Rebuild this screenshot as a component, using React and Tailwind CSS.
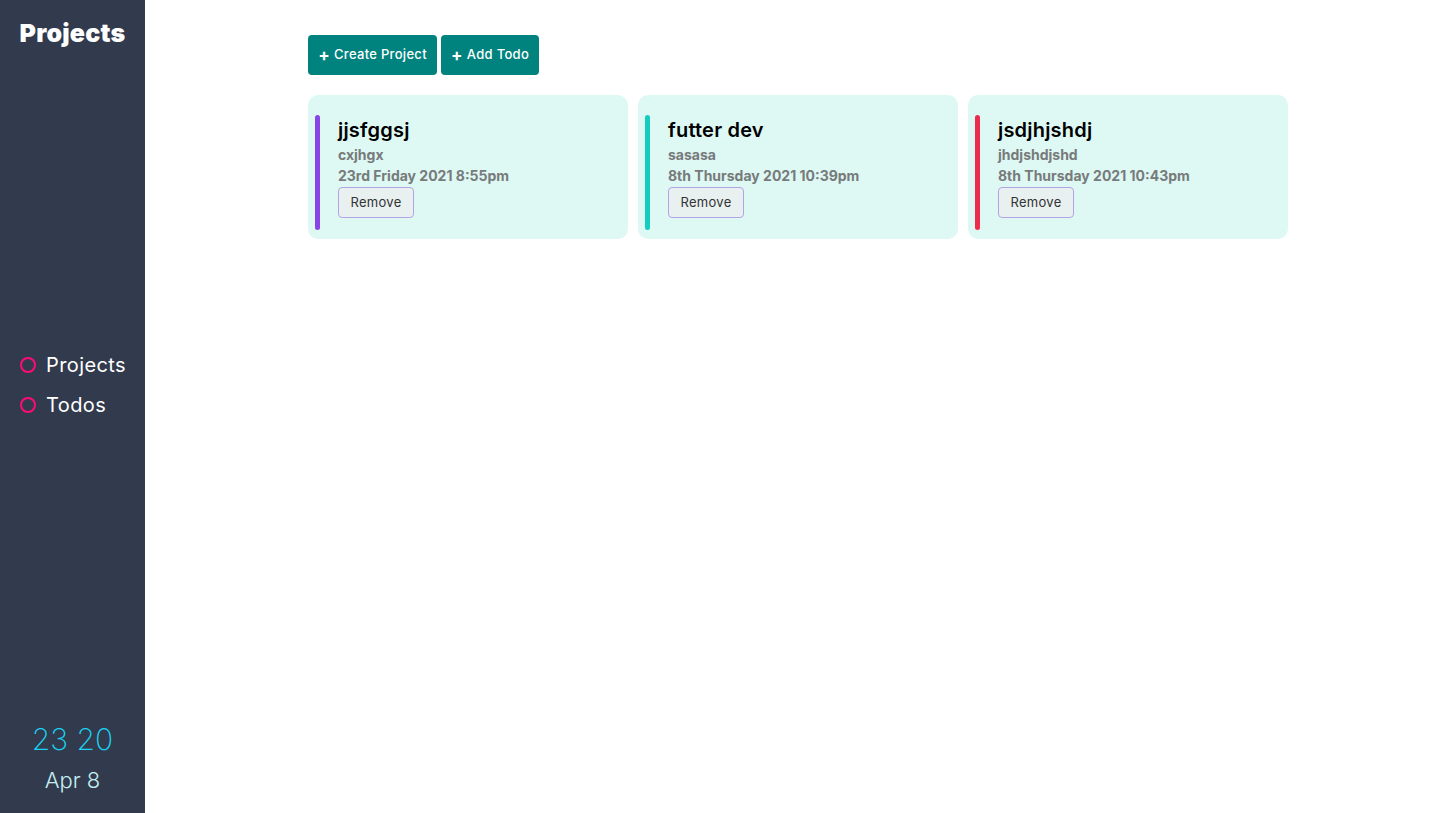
const projects = [
  { title: "jjsfggsj", desc: "cxjhgx", date: "23rd Friday 2021 8:55pm", bar: "bg-[#8a45e6]" },
  { title: "futter dev", desc: "sasasa", date: "8th Thursday 2021 10:39pm", bar: "bg-[#12cdc0]" },
  { title: "jsdjhjshdj", desc: "jhdjshdjshd", date: "8th Thursday 2021 10:43pm", bar: "bg-[#ec2c4c]" },
];

function Sidebar() {
  return (
    <aside className="flex h-full w-[145px] shrink-0 flex-col bg-[#323a4d] text-white">
      <h1 className="pt-[16px] text-center text-[25px] font-black leading-[34px] tracking-[0.2px]">Projects</h1>

      <nav className="mt-[301px] flex flex-col gap-[12px] pl-[20px]">
        <NavItem label="Projects" />
        <NavItem label="Todos" />
      </nav>

      <div className="mt-auto pb-[18px] text-center">
        <p className="mb-[6px] text-[30px] font-extralight leading-[40px] text-[#18d4f2]">23 20</p>
        <p className="text-[22px] font-light leading-[30px] text-[#c4eef2]">Apr 8</p>
      </div>
    </aside>
  );
}

function NavItem({ label }) {
  return (
    <div className="flex h-[28px] items-center gap-[10px]">
      <span className="h-[16px] w-[16px] rounded-full border-[2px] border-[#ff0a78]" />
      <span className="text-[20px] leading-[28px] tracking-[0.4px]">{label}</span>
    </div>
  );
}

function ProjectCard({ project }) {
  return (
    <div className="flex h-[144px] w-[320px] gap-[18px] rounded-[10px] bg-[#def8f4] px-[7px] pt-[20px]">
      <div className={`h-[115px] w-[5px] shrink-0 rounded-full ${project.bar}`} />
      <div className="flex flex-col items-start">
        <h2 className="text-[20px] font-semibold leading-[30px] tracking-[0.2px] text-black">{project.title}</h2>
        <p className="text-[14px] font-bold leading-[20px] text-[#777b7b]">{project.desc}</p>
        <p className="text-[14px] font-bold leading-[22px] text-[#777b7b]">{project.date}</p>
        <button className="h-[31px] w-[76px] rounded-[4px] border border-[#b2a4e6] bg-[#e8f0f0] text-[13px] tracking-[0.3px] text-[#333]">
          Remove
        </button>
      </div>
    </div>
  );
}

export default function App() {
  return (
    <div className="flex h-[813px] w-full bg-white font-['Inter',sans-serif]">
      <Sidebar />
      <main className="flex-1 pl-[163px] pt-[35px]">
        <div className="flex gap-[4px]">
          <button className="flex h-[40px] w-[129px] items-center justify-center gap-[4px] rounded-[4px] bg-[#00837e] text-[13px] font-medium tracking-[0.3px] text-white">
            <span className="text-[17px] font-bold leading-none">+</span> Create Project
          </button>
          <button className="flex h-[40px] w-[98px] items-center justify-center gap-[4px] rounded-[4px] bg-[#00837e] text-[13px] font-medium tracking-[0.3px] text-white">
            <span className="text-[17px] font-bold leading-none">+</span> Add Todo
          </button>
        </div>

        <div className="mt-[20px] flex gap-[10px]">
          {projects.map((p) => (
            <ProjectCard key={p.title} project={p} />
          ))}
        </div>
      </main>
    </div>
  );
}
